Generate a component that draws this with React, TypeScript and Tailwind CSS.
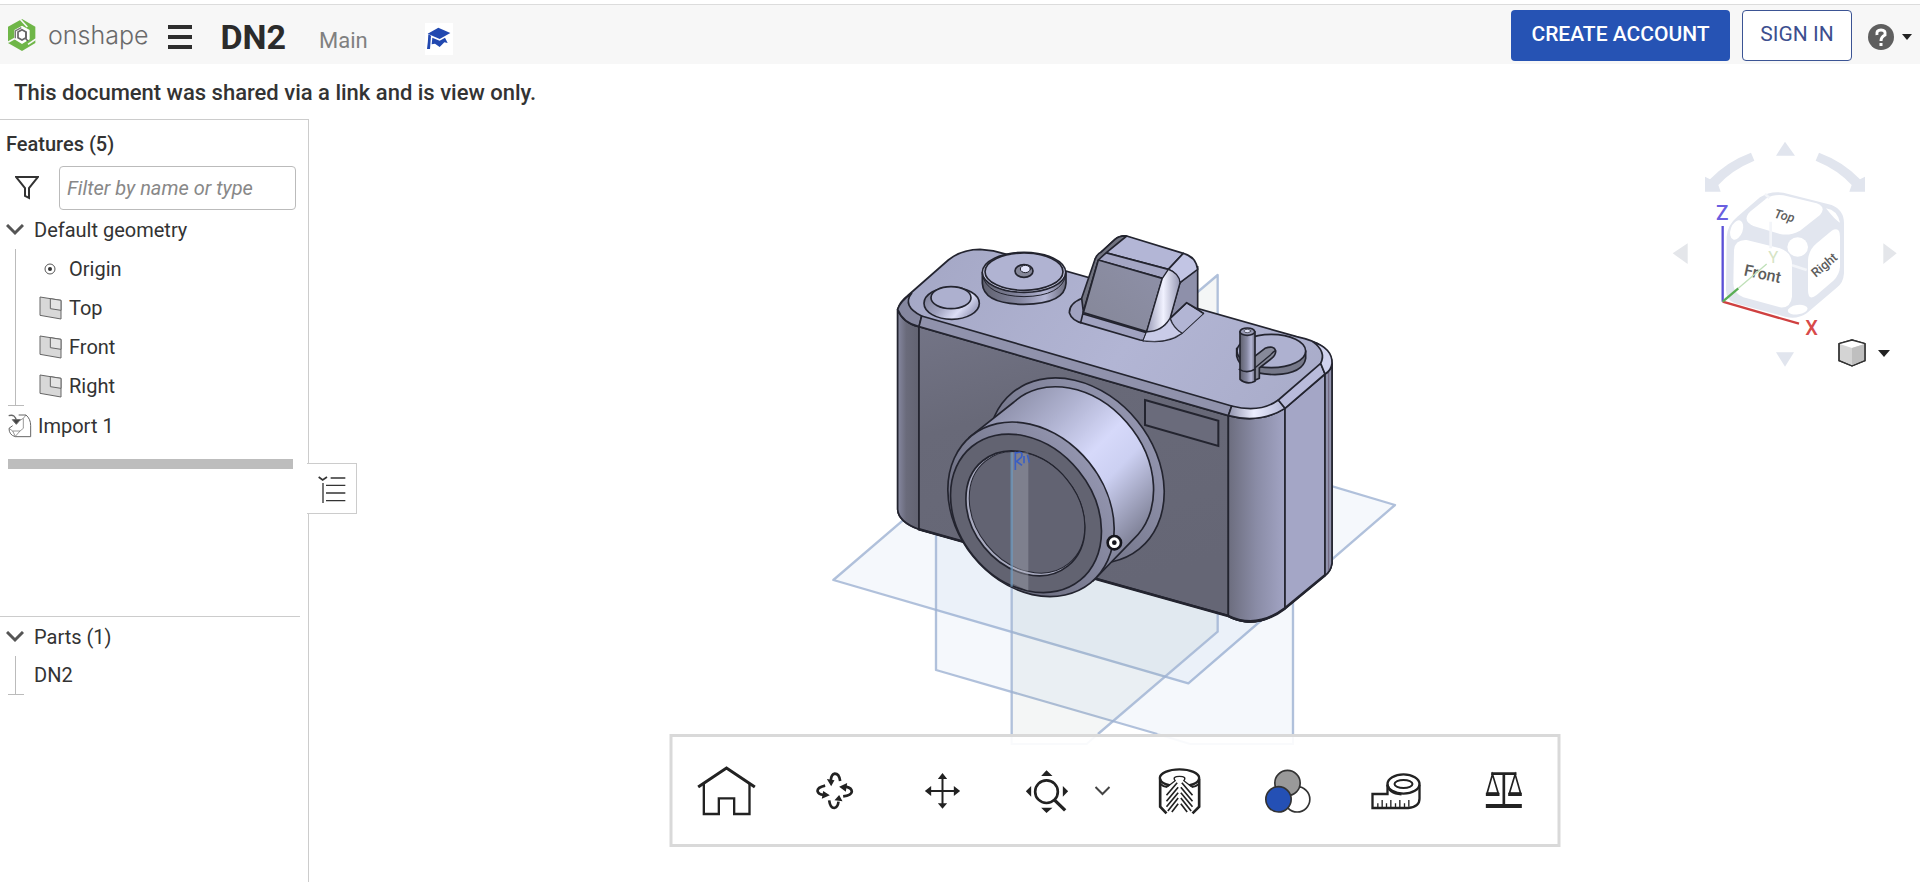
import React, { useState } from 'react';

interface RowProps {
  icon: React.ReactNode;
  label: string;
}

const PlaneIcon: React.FC = () => (
  <svg width="24" height="24" viewBox="0 0 72 72" fill="#d8d8d8" stroke="#666" strokeWidth="3">
    <path d="M3 3 L66 13 V69 L3 58 Z" />
    <path d="M34 8 V38 L66 43 V13 Z" fill="#e4e4e4" />
  </svg>
);

const OriginIcon: React.FC = () => (
  <svg width="24" height="24" viewBox="0 0 24 24">
    <circle cx="11" cy="12" r="5" fill="none" stroke="#555" strokeWidth="1" />
    <circle cx="11" cy="12" r="2" fill="#333" />
  </svg>
);

const ImportIcon: React.FC = () => (
  <svg width="24" height="26" viewBox="0 0 72 78" fill="none" stroke="#666" strokeWidth="3">
    <path d="M2 8 Q22 2 25 24" strokeWidth="4" />
    <path d="M13 20 L25 34 L37 20 Z" fill="#444" />
    <path d="M32 6 H54 Q68 18 68 38 V71 H22 Q3 66 3 46 L14 38" />
    <path d="M36 22 L46 16 V46 L36 54 H14 L3 46 M46 16 L54 6 M36 54 L22 70 M14 54 L22 70" strokeWidth="2" />
  </svg>
);

const Chevron: React.FC = () => (
  <svg width="18" height="12" viewBox="0 0 18 12" fill="none" stroke="#555" strokeWidth="3">
    <path d="M1 1 L9 9 L17 1" />
  </svg>
);

const TreeRow: React.FC<RowProps> = ({ icon, label }) => (
  <li className="flex h-[39px] items-center gap-[6px] pl-[23px]">
    {icon}
    <span>{label}</span>
  </li>
);

/* Shaded camera part with the three default planes */
const CameraModel: React.FC = () => (
  <svg width="590" height="530" viewBox="0 0 1770 1590" role="img" aria-label="DN2 model">
    <defs>
      <linearGradient id="front" x1="0" y1="0" x2="0.3" y2="1">
        <stop offset="0" stopColor="#737486" />
        <stop offset="0.35" stopColor="#686978" />
        <stop offset="1" stopColor="#656675" />
      </linearGradient>
      <linearGradient id="leftCorner">
        <stop offset="0" stopColor="#8688a0" />
        <stop offset="0.4" stopColor="#6a6b7b" />
        <stop offset="1" stopColor="#626371" />
      </linearGradient>
      <linearGradient id="corner">
        <stop offset="0" stopColor="#6c6d7e" />
        <stop offset="0.5" stopColor="#8a8ca6" />
        <stop offset="1" stopColor="#a2a4c4" />
      </linearGradient>
      <linearGradient id="top" x1="0" y1="0" x2="1" y2="0.6">
        <stop offset="0" stopColor="#a3a6c4" />
        <stop offset="0.5" stopColor="#b2b5d4" />
        <stop offset="1" stopColor="#a6a9c6" />
      </linearGradient>
      <linearGradient id="cornerRim">
        <stop offset="0" stopColor="#9193ad" />
        <stop offset="0.45" stopColor="#eceeff" />
        <stop offset="1" stopColor="#b4b7d6" />
      </linearGradient>
      <linearGradient id="barrel" gradientUnits="userSpaceOnUse" x1="500" y1="590" x2="930" y2="1010">
        <stop offset="0" stopColor="#8c8ea8" />
        <stop offset="0.25" stopColor="#aeb1cf" />
        <stop offset="0.5" stopColor="#d6d9fa" />
        <stop offset="0.65" stopColor="#ccd0f2" />
        <stop offset="1" stopColor="#74768a" />
      </linearGradient>
      <linearGradient id="flange" x1="0" y1="1" x2="0" y2="0">
        <stop offset="0" stopColor="#68697a" />
        <stop offset="0.6" stopColor="#82849b" />
        <stop offset="1" stopColor="#9294ae" />
      </linearGradient>
      <linearGradient id="metal">
        <stop offset="0" stopColor="#5f606e" />
        <stop offset="0.45" stopColor="#8587a0" />
        <stop offset="0.75" stopColor="#b5b7d6" />
        <stop offset="1" stopColor="#6a6b7c" />
      </linearGradient>
      <linearGradient id="button" x1="0" y1="0" x2="1" y2="0.5">
        <stop offset="0" stopColor="#777990" />
        <stop offset="0.5" stopColor="#a2a4c0" />
        <stop offset="0.8" stopColor="#dcdef6" />
        <stop offset="1" stopColor="#a6a8c6" />
      </linearGradient>
      <linearGradient id="hump" x1="1" y1="0" x2="0" y2="1">
        <stop offset="0" stopColor="#8e90a8" />
        <stop offset="1" stopColor="#858798" />
      </linearGradient>
      <linearGradient id="humpEdge">
        <stop offset="0" stopColor="#9a9cb8" />
        <stop offset="0.5" stopColor="#f1f2ff" />
        <stop offset="1" stopColor="#9698b3" />
      </linearGradient>
    </defs>

    {/* planes */}
    <g stroke="#9db2d2" strokeOpacity="0.8" strokeWidth="7" strokeLinejoin="round">
      <path d="M40 1080 L670 540 L1725 855 L1105 1390 Z" fill="#6f9fd0" fillOpacity="0.07" />
      <path d="M348 1350 V300 L1419 600 V1542 H1012 Z" fill="#6f9fd0" fillOpacity="0.07" stroke="none" />
      <path d="M348 900 V1350 L1012 1542 M1419 1100 V1542" fill="none" />
      <path d="M575 1542 V690 L1193 165 V1235 L834 1542 Z" fill="#748c90" fillOpacity="0.08" stroke="none" />
      <path d="M575 1542 V690 L1193 165 V1235 L834 1542" fill="none" />
    </g>
    <g stroke="#9db2d2" strokeOpacity="0.3" strokeWidth="6" fill="none">
      <path d="M575 1542 V1572 H800 L834 1542 M1012 1542 L1110 1572 H1419 V1542" />
    </g>

    <g stroke="#23242f" strokeWidth="5" strokeLinejoin="round" strokeLinecap="round">
      {/* body */}
      <path
        d="M233 268 Q240 245 262 228 L385 120 Q425 88 480 88 Q520 90 560 103 L1430 350 Q1535 372 1536 432 V1030 Q1532 1055 1515 1066 L1395 1165 Q1330 1212 1275 1205 Q1245 1200 1222 1187 L297 928 Q235 905 233 868 Z"
        fill="url(#top)"
      />
      <path d="M233 268 Q248 308 297 320 V928 Q235 905 233 868 Z" fill="url(#leftCorner)" />
      <path d="M297 320 L1225 587 V1187 L297 928 Z" fill="url(#front)" />
      <path d="M1225 587 Q1320 612 1395 565 V1165 Q1330 1212 1275 1205 Q1245 1200 1225 1188 Z" fill="url(#corner)" />
      <path d="M1395 565 L1515 462 V1066 L1395 1165 Z" fill="#a4a6c6" />
      <path d="M1515 462 Q1534 450 1536 430 V1030 Q1532 1055 1515 1066 Z" fill="#9193ae" />
      <path d="M1526 455 V1050" strokeWidth="2" stroke="#5d4a63" fill="none" />

      {/* rounded rim */}
      <path d="M233 268 Q240 245 275 220 Q245 258 305 288 L297 320 Q248 308 233 268 Z" fill="#85879f" />
      <path d="M305 288 L1235 558 L1225 587 L297 320 Z" fill="#9092ac" />
      <path d="M1235 558 Q1320 580 1375 540 L1395 565 Q1320 612 1225 587 Z" fill="url(#cornerRim)" />
      <path d="M1375 540 L1502 430 L1515 462 L1395 565 Z" fill="#b9bbdb" />
      <path d="M1502 430 Q1520 395 1478 365 Q1538 385 1536 430 Q1534 450 1515 462 Z" fill="#d0d2ee" />
      <path d="M297 928 L1222 1187 Q1310 1230 1395 1165 L1515 1066" strokeWidth="8" fill="none" />

      {/* shutter button */}
      <ellipse cx="395" cy="250" rx="83" ry="48" fill="url(#button)" />
      <ellipse cx="393" cy="233" rx="60" ry="33" fill="#adb0cf" />

      {/* mode dial */}
      <path d="M487 158 V190 Q490 252 612 253 Q735 252 738 190 V158 Z" fill="url(#metal)" />
      <path d="M487 165 Q500 228 612 230 Q725 228 738 165" fill="none" strokeWidth="3" />
      <ellipse cx="612" cy="157" rx="125" ry="60" fill="#d5d7f2" />
      <ellipse cx="612" cy="155" rx="117" ry="56" fill="#b0b3d2" />
      <ellipse cx="612" cy="153" rx="27" ry="19" fill="#858799" />
      <ellipse cx="616" cy="147" rx="15" ry="11" fill="#e2e4fa" strokeWidth="3" />

      {/* viewfinder hump */}
      <path
        d="M787 235 Q748 250 748 278 Q755 302 790 310 L960 360 Q1040 375 1085 340 L1150 280 L1100 248 L980 200 Z"
        fill="#a0a2c0"
      />
      <path d="M1150 280 L1100 248 L1050 295 Q1060 325 1085 340" fill="#b2b5d4" />
      <path d="M1080 188 L1133 140 V268 L1100 248 L1050 295 Z" fill="#8e90aa" />
      <path d="M845 95 L885 58 Q900 46 920 48 L1090 100 L1045 148 Z" fill="#b3b6d6" />
      <path d="M1045 148 L1090 100 Q1128 110 1133 148 L1080 188 Z" fill="#c2c5e4" />
      <path d="M845 95 L1045 148 Q1070 158 1080 188 L1027 175 L825 118 Z" fill="#a4a6c4" />
      <path d="M825 118 Q830 102 845 95 L885 58 Q900 46 920 48 L860 97 L835 120 L790 275 L785 235 Z" fill="#70727f" />
      <path d="M835 120 L1027 175 L980 335 L790 278 Z" fill="url(#hump)" />
      <path d="M1027 175 L1045 148 Q1078 160 1080 188 L1050 295 Q1025 335 980 335 Z" fill="url(#humpEdge)" strokeWidth="4" />
      <path d="M790 275 L782 308 M980 335 L970 362 M790 282 L980 338" fill="none" />
      <path d="M980 337 Q1030 335 1050 297 Q1060 325 1085 340 Q1040 372 970 362 Z" fill="#c9cbe8" strokeWidth="2" />

      {/* rewind crank */}
      <path d="M1250 385 V408 Q1262 462 1365 464 Q1450 460 1457 415 V393 Z" fill="#767889" />
      <ellipse cx="1354" cy="393" rx="103" ry="50" fill="#aeb1d0" />
      <path d="M1300 412 L1335 385 Q1362 375 1367 392 Q1368 405 1355 415 L1318 444 V475 L1298 484 Z" fill="#878999" />
      <path d="M1300 448 L1352 404 Q1360 395 1366 392" fill="none" strokeWidth="4" />
      <path d="M1260 335 V478 Q1280 496 1305 484 V335 Z" fill="url(#metal)" />
      <path d="M1258 448 Q1280 462 1305 448" fill="none" />
      <ellipse cx="1282" cy="335" rx="22" ry="11" fill="#9a9cb6" />
      <ellipse cx="1282" cy="333" rx="10" ry="5" fill="#e4e6fa" strokeWidth="2" />

      <path d="M975 540 L1195 602 V678 L975 615 Z" fill="#6a6b7b" strokeWidth="6" strokeLinejoin="miter" />

      {/* lens */}
      <ellipse cx="768" cy="752" rx="302" ry="237" transform="rotate(51 768 752)" fill="url(#flange)" />
      <path d="M447 653 L582 546 A273 215 51 1 1 940 958 L819 1083 Z" fill="url(#barrel)" />
      <ellipse cx="633" cy="868" rx="284" ry="224" transform="rotate(51 633 868)" fill="url(#flange)" />
      <ellipse cx="618" cy="880" rx="258" ry="203" transform="rotate(51 618 880)" fill="#626371" />
      <ellipse cx="616" cy="880" rx="203" ry="160" transform="rotate(51 616 880)" fill="#a9abc0" />
      <ellipse cx="621" cy="877" rx="198" ry="155" transform="rotate(51 621 877)" fill="#626372" strokeWidth="3" />
    </g>

    {/* plane edge seen through the glass */}
    <path d="M575 697 H625 V1112 L575 1090 Z" fill="#b4b6c4" fillOpacity="0.35" />
    <path d="M575 697 V1100" stroke="#6c9cc4" strokeWidth="7" strokeOpacity="0.7" />
    <path d="M586 695 V750 M586 700 Q612 690 604 712 L590 724 L606 736 M612 708 V730 M622 704 L628 728" fill="none" stroke="#3a5fc4" strokeWidth="5" />

    <circle cx="883" cy="968" r="20" fill="#fff" stroke="#15151c" strokeWidth="8" />
    <circle cx="883" cy="968" r="7" fill="#15151c" />
  </svg>
);

const ViewCube: React.FC = () => (
  <svg width="270" height="260" viewBox="0 0 810 780" role="img" aria-label="View cube">
    <g fill="#e1e5ee">
      <path d="M378 107 L405 65 L435 107 Z" />
      <path d="M378 697 H432 L405 740 Z" />
      <path d="M68 400 L113 370 V432 Z" fill="#e4e6ea" />
      <path d="M700 370 V432 L740 400 Z" fill="#e4e6ea" />
      <path d="M165 170 L180 178 Q230 125 303 98 L313 122 Q245 150 205 195 L212 215 H165 Z" />
      <path d="M645 170 L630 178 Q580 125 507 98 L497 122 Q565 150 605 195 L598 215 H645 Z" />
    </g>
    <path d="M230 350 Q232 315 262 290 L330 232 Q360 212 400 218 L545 255 Q582 270 582 310 V460 Q580 490 560 503 L470 580 Q440 600 405 590 L255 550 Q228 540 228 510 Z" fill="#e2e6ef" />
    <g fill="#fff">
      <path d="M300 275 L350 235 Q372 222 400 226 L500 250 Q530 262 510 285 L450 332 Q420 348 390 342 L310 318 Q275 302 300 275 Z" />
      <path d="M252 390 Q255 358 290 360 L390 385 Q425 398 426 430 V530 Q422 565 390 562 L280 532 Q250 520 250 490 Z" />
      <path d="M474 420 Q476 390 500 370 L545 332 Q570 318 570 350 V440 Q568 465 550 482 L500 525 Q474 545 474 510 Z" />
      <ellipse cx="443" cy="381" rx="31" ry="29" />
      <ellipse cx="260" cy="330" rx="18" ry="30" transform="rotate(20 260 330)" />
      <ellipse cx="443" cy="569" rx="30" ry="14" transform="rotate(-8 443 569)" />
      <path d="M528 265 Q562 270 570 308 Q555 300 528 265 Z" />
    </g>
    <path d="M426 436 L470 450 M362 305 V385 M345 222 L358 234" stroke="#f3f5f9" strokeWidth="8" />
    <g fill="#5c5c5c" fontFamily="Roboto, sans-serif" textAnchor="middle">
      <text x="338" y="478" fontSize="48" fontWeight="500" transform="rotate(12 338 460)">Front</text>
      <text x="404" y="300" fontSize="38" fontWeight="500" fontStyle="italic" transform="rotate(14 404 286)">Top</text>
      <text x="522" y="448" fontSize="38" fontWeight="500" transform="rotate(-40 522 434)">Right</text>
    </g>
    <path d="M218 545 V318" stroke="#5b50d6" strokeWidth="7" />
    <path d="M218 545 L447 611" stroke="#cf4040" strokeWidth="7" />
    <path d="M218 545 L265 505" stroke="#5aae55" strokeWidth="7" />
    <path d="M265 505 L350 432" stroke="#bfe0b8" strokeWidth="4" />
    <g fontFamily="Roboto, sans-serif" fontWeight="500" textAnchor="middle">
      <text x="217" y="299" fontSize="62" fill="#6a5fe0">Z</text>
      <text x="485" y="645" fontSize="60" fill="#d84a4a">X</text>
      <text x="370" y="430" fontSize="50" fontWeight="400" fill="#d6e4c4">Y</text>
    </g>
  </svg>
);

const HomeIcon: React.FC = () => (
  <svg width="60" height="60" viewBox="108 106 180 180" fill="none" stroke="#222" strokeWidth="7">
    <path d="M113 184 L198 127 L283 184" strokeWidth="9" />
    <path d="M130 172 V265 H175 V218 H221 V265 H267 V172" />
  </svg>
);

const RotateIcon: React.FC = () => (
  <svg width="44" height="44" viewBox="458 130 132 132" fill="none" stroke="#222" strokeWidth="8">
    <path d="M541 166 Q538 144 525 144 Q514 146 513 164" />
    <path d="M558 183 Q576 187 576 198 Q574 209 550 212" />
    <path d="M508 224 Q511 247 523 247 Q534 245 536 228" />
    <path d="M496 180 Q473 185 473 196 Q475 206 492 208" />
    <path d="M501 160 L524 164 L514 182 Z M562 172 L558 198 L538 183 Z M524 224 L548 227 L538 208 Z M490 196 L486 219 L510 209 Z" fill="#222" stroke="none" />
  </svg>
);

const PanIcon: React.FC = () => (
  <svg width="44" height="44" viewBox="780 132 132 132" fill="#222">
    <path d="M806 195 H887 V201 H806 Z M843 158 H849 V238 H843 Z" />
    <path d="M793 198 L812 183 V213 Z M899 198 L880 183 V213 Z M846 144 L832 162 H860 Z M846 251 L832 235 H860 Z" />
  </svg>
);

const ZoomFitIcon: React.FC = () => (
  <svg width="48" height="48" viewBox="1090 126 144 144" fill="#222">
    <circle cx="1162" cy="200" r="34" fill="none" stroke="#222" strokeWidth="8" />
    <path d="M1187 226 L1218 256" stroke="#222" strokeWidth="10" />
    <path d="M1146 153 L1162 136 L1180 153 Z M1146 248 H1180 L1162 264 Z M1100 199 L1116 183 V215 Z M1227 199 L1211 183 V215 Z" />
  </svg>
);

const SectionIcon: React.FC = () => (
  <svg width="50" height="50" viewBox="132 124 150 150" fill="none" stroke="#222" strokeWidth="6">
    <path d="M168 266 L149 246 V162 M246 266 L266 246 V162" strokeWidth="8" />
    <ellipse cx="207" cy="160" rx="59" ry="26" strokeWidth="7" />
    <path d="M172 188 L190 168 Q186 156 207 156 Q228 156 224 168 L242 188 V230 H172 Z" fill="#fff" stroke="none" />
    <path d="M170 187 L194 168 Q184 155 207 155 Q230 155 220 168 L244 187" strokeWidth="4" />
    <path
      d="M168 212 L200 174 M168 230 L203 188 M168 246 L203 204 M172 259 L203 220 M184 262 L203 237 M246 212 L214 174 M246 230 L211 188 M246 246 L211 204 M242 259 L211 220 M230 262 L211 237"
      strokeWidth="5"
    />
    <path d="M150 178 Q158 186 170 187 M265 178 Q256 186 244 187" />
  </svg>
);

const AppearanceIcon: React.FC = () => (
  <svg width="50" height="50" viewBox="456 122 150 150" stroke="#333" strokeWidth="5">
    <circle cx="560" cy="222" r="38" fill="#fff" />
    <circle cx="531" cy="173" r="38" fill="#999" />
    <circle cx="504" cy="222" r="38" fill="#2450b5" />
  </svg>
);

const MeasureIcon: React.FC = () => (
  <svg width="54" height="54" viewBox="776 112 162 162" fill="none" stroke="#222" strokeWidth="7">
    <path d="M833 174 V202 H788 V244 H895 Q930 240 929 215 V174" />
    <ellipse cx="881" cy="172" rx="48" ry="29" />
    <ellipse cx="881" cy="172" rx="27" ry="12" strokeWidth="6" />
    <path d="M833 174 Q836 200 875 203" />
    <path d="M804 242 V230 M817 242 V220 M830 242 V230 M843 242 V220 M857 242 V230 M870 242 V220 M884 242 V230 M897 240 V220" strokeWidth="4" />
  </svg>
);

const MassIcon: React.FC = () => (
  <svg width="44" height="44" viewBox="1112 134 132 132" fill="none" stroke="#222" strokeWidth="5">
    <path d="M1141 148 H1217" strokeWidth="8" />
    <path d="M1179 148 V240" strokeWidth="8" />
    <path d="M1145 150 L1129 206 H1162 Z M1213 150 L1196 206 H1229 Z" />
    <path d="M1125 210 H1166 M1192 210 H1233" strokeWidth="10" />
    <path d="M1125 245 H1233" strokeWidth="12" />
  </svg>
);

const ToolButton: React.FC<{ label: string; children: React.ReactNode }> = ({ label, children }) => (
  <button type="button" aria-label={label} className="flex h-full flex-1 items-center justify-center hover:bg-gray-100">
    {children}
  </button>
);

const Header: React.FC = () => (
  <header className="mt-1 flex h-[60px] items-center border-t border-[#dcdcdc] bg-[#f7f7f7] pr-2 pl-2">
    <a href="#home" className="flex items-center gap-3 text-[#6a6a6a]">
      <svg width="28" height="32" viewBox="0 0 84 96" fill="none">
        <path d="M42 0 L82 23 V72 L42 96 L0 72 V23 Z" fill="#6fb648" />
        <path d="M42 20 L65 33 V61 L42 75 L19 61 V33 Z" fill="#fff" />
        <path d="M0 70 L24 56 M84 60 L60 76 M36 0 L58 24" stroke="#f7f7f7" strokeWidth="5" />
        <path d="M42 32 L54 39 V56 L42 63 L30 56 V39 Z" stroke="#666" strokeWidth="5" />
        <path d="M22 58 L22 36 L40 26" stroke="#777" strokeWidth="4" />
        <path d="M54 38 V60 L60 66" stroke="#666" strokeWidth="5" />
      </svg>
      <span className="font-['Inter'] text-[25px] leading-8 font-light">onshape</span>
    </a>
    <button type="button" aria-label="Menu" className="ml-5 flex w-6 flex-col gap-[6px] pt-1">
      <span className="h-1 w-full bg-[#2e2e2e]" />
      <span className="h-1 w-full bg-[#2e2e2e]" />
      <span className="h-1 w-full bg-[#2e2e2e]" />
    </button>
    <h1 className="mt-1 ml-7 text-[34px] leading-10 font-bold text-[#2b2b2b]">DN2</h1>
    <span className="mt-3 ml-[33px] text-[22px] leading-8 text-[#808080]">Main</span>
    <button type="button" aria-label="Learning center" className="mt-2 ml-[57px] flex h-8 w-7 items-center justify-center bg-white">
      <svg width="24" height="24" viewBox="0 0 72 72" fill="#2148b0">
        <path d="M34 2 L70 18 L38 36 L2 20 Z" />
        <path d="M4 22 L12 26 L9 66 H0 Q3 46 4 22 Z" />
        <path d="M16 32 L38 41 L54 32 L62 48 L52 46 L38 60 L24 50 L14 52 Z" />
      </svg>
    </button>
    <div className="ml-auto flex items-center pt-px">
      <button type="button" className="h-[51px] w-[219px] rounded bg-[#2653b4] text-[21px] font-medium text-white">
        CREATE ACCOUNT
      </button>
      <button type="button" className="ml-3 h-[51px] w-[110px] rounded border border-[#3b5494] bg-white text-[21px] text-[#3d4f8f]">
        SIGN IN
      </button>
      <button type="button" aria-label="Help" className="ml-4 flex items-center gap-2 pt-1">
        <svg width="26" height="26" viewBox="0 0 26 26">
          <circle cx="13" cy="13" r="13" fill="#5f5f5f" />
          <path d="M9 11 Q8 6 13 6 Q18 6 17 11 Q13 13 13 17 M13 19 V22" fill="none" stroke="#fff" strokeWidth="3" />
        </svg>
        <svg width="10" height="6" viewBox="0 0 10 6">
          <path d="M0 0 H10 L5 6 Z" fill="#222" />
        </svg>
      </button>
    </div>
  </header>
);

const Sidebar: React.FC = () => {
  const [filter, setFilter] = useState('');

  return (
    <aside className="relative flex w-[309px] shrink-0 flex-col border-t border-r border-[#ccc] text-xl leading-6">
      {/* Feature list */}
      <section className="flex min-h-[496px] flex-col">
        <h2 className="mt-3 pl-[6px] font-medium">Features (5)</h2>
        <div className="mt-[10px] flex items-center gap-5 pl-[15px]">
          <svg width="24" height="24" viewBox="0 0 24 24" fill="none" stroke="#333" strokeWidth="2">
            <path d="M1 1 H23 L14 12 V22 L10 20 V12 Z" />
          </svg>
          <input
            type="text"
            aria-label="Filter by name or type"
            placeholder="Filter by name or type"
            value={filter}
            onChange={(e) => setFilter(e.target.value)}
            className="h-11 w-[237px] rounded-sm border border-[#bbb] px-[7px] italic placeholder:text-[#888]"
          />
        </div>
        <div className="flex h-[39px] items-center gap-[10px] pl-[6px]">
          <Chevron />
          <span>Default geometry</span>
        </div>
        <div className="flex">
          <div className="w-4 shrink-0 border-r border-[#bbb]" />
          <ul className="flex-1">
            <TreeRow icon={<OriginIcon />} label="Origin" />
            <TreeRow icon={<PlaneIcon />} label="Top" />
            <TreeRow icon={<PlaneIcon />} label="Front" />
            <TreeRow icon={<PlaneIcon />} label="Right" />
          </ul>
        </div>
        <div className="ml-2 h-px w-4 bg-[#bbb]" />
        <div className="flex h-[39px] items-center gap-[6px] pl-2">
          <ImportIcon />
          <span>Import 1</span>
        </div>
        <div className="mt-[14px] ml-2 h-[10px] w-[285px] bg-[#bdbdbd]" />
      </section>

      {/* Parts list */}
      <section className="mr-2 border-t border-[#ccc]">
        <div className="flex h-[39px] items-center gap-[10px] pl-[6px]">
          <Chevron />
          <span>Parts (1)</span>
        </div>
        <div className="flex h-[38px]">
          <div className="w-4 border-r border-[#bbb]" />
          <span className="self-center pl-[18px]">DN2</span>
        </div>
        <div className="ml-2 h-px w-4 bg-[#bbb]" />
      </section>

      <button
        type="button"
        aria-label="Toggle feature list"
        className="absolute top-[343px] left-[307px] flex h-[51px] w-[50px] items-center justify-center border border-l-0 border-[#ccc] bg-white"
      >
        <svg width="28" height="28" viewBox="0 0 84 84" fill="none" stroke="#333" strokeWidth="4">
          <path d="M2 6 L14 15 L27 6" strokeWidth="5" />
          <path d="M38 9 H82 M24 31 H82 M24 54 H82 M24 77 H82 M15 24 V84" />
        </svg>
      </button>
    </aside>
  );
};

const Toolbar: React.FC = () => (
  <nav className="absolute bottom-[35px] left-1/2 flex h-[113px] w-[891px] -translate-x-1/2 items-center border-3 border-[#d9d9d9] bg-white/80">
    <ToolButton label="Home"><HomeIcon /></ToolButton>
    <ToolButton label="Rotate"><RotateIcon /></ToolButton>
    <ToolButton label="Pan"><PanIcon /></ToolButton>
    <div className="flex h-full w-[129px] items-center pl-[26px]">
      <button type="button" aria-label="Zoom to fit"><ZoomFitIcon /></button>
      <button type="button" aria-label="Zoom options" className="ml-6">
        <svg width="16" height="10" viewBox="0 0 16 10" fill="none" stroke="#444" strokeWidth="2">
          <path d="M1 1 L8 8 L15 1" />
        </svg>
      </button>
    </div>
    <ToolButton label="Section view"><SectionIcon /></ToolButton>
    <ToolButton label="Appearance"><AppearanceIcon /></ToolButton>
    <ToolButton label="Measure"><MeasureIcon /></ToolButton>
    <ToolButton label="Mass properties"><MassIcon /></ToolButton>
  </nav>
);

const App: React.FC = () => (
  <div className="flex min-h-screen flex-col bg-white font-['Roboto',sans-serif] text-[#333]">
    <Header />
    <p className="flex h-[55px] items-center pt-[2px] pl-[14px] text-[22px] font-medium">
      This document was shared via a link and is view only.
    </p>
    <div className="flex flex-1">
      <Sidebar />
      <main className="relative flex flex-1 justify-center">
        <div className="pt-[101px]">
          <CameraModel />
        </div>
        <div className="absolute top-px right-0">
          <ViewCube />
        </div>
        <button type="button" aria-label="View options" className="absolute top-[220px] right-[30px] flex items-center gap-3">
          <svg width="28" height="28" viewBox="0 0 84 84" stroke="#333" strokeWidth="4" strokeLinejoin="round">
            <path d="M42 3 L81 14 V65 L42 81 L3 65 V14 Z" fill="#d4d4d4" />
            <path d="M42 3 L81 14 L42 27 L3 14 Z" fill="#fff" stroke="none" />
            <path d="M42 27 L79 16 V64 L42 79 Z" fill="#bfbfbf" stroke="none" />
            <path d="M42 3 L81 14 V65 L42 81 L3 65 V14 Z" fill="none" />
          </svg>
          <svg width="12" height="7" viewBox="0 0 12 7">
            <path d="M0 0 H12 L6 7 Z" fill="#222" />
          </svg>
        </button>
        <Toolbar />
      </main>
    </div>
  </div>
);

export default App;
